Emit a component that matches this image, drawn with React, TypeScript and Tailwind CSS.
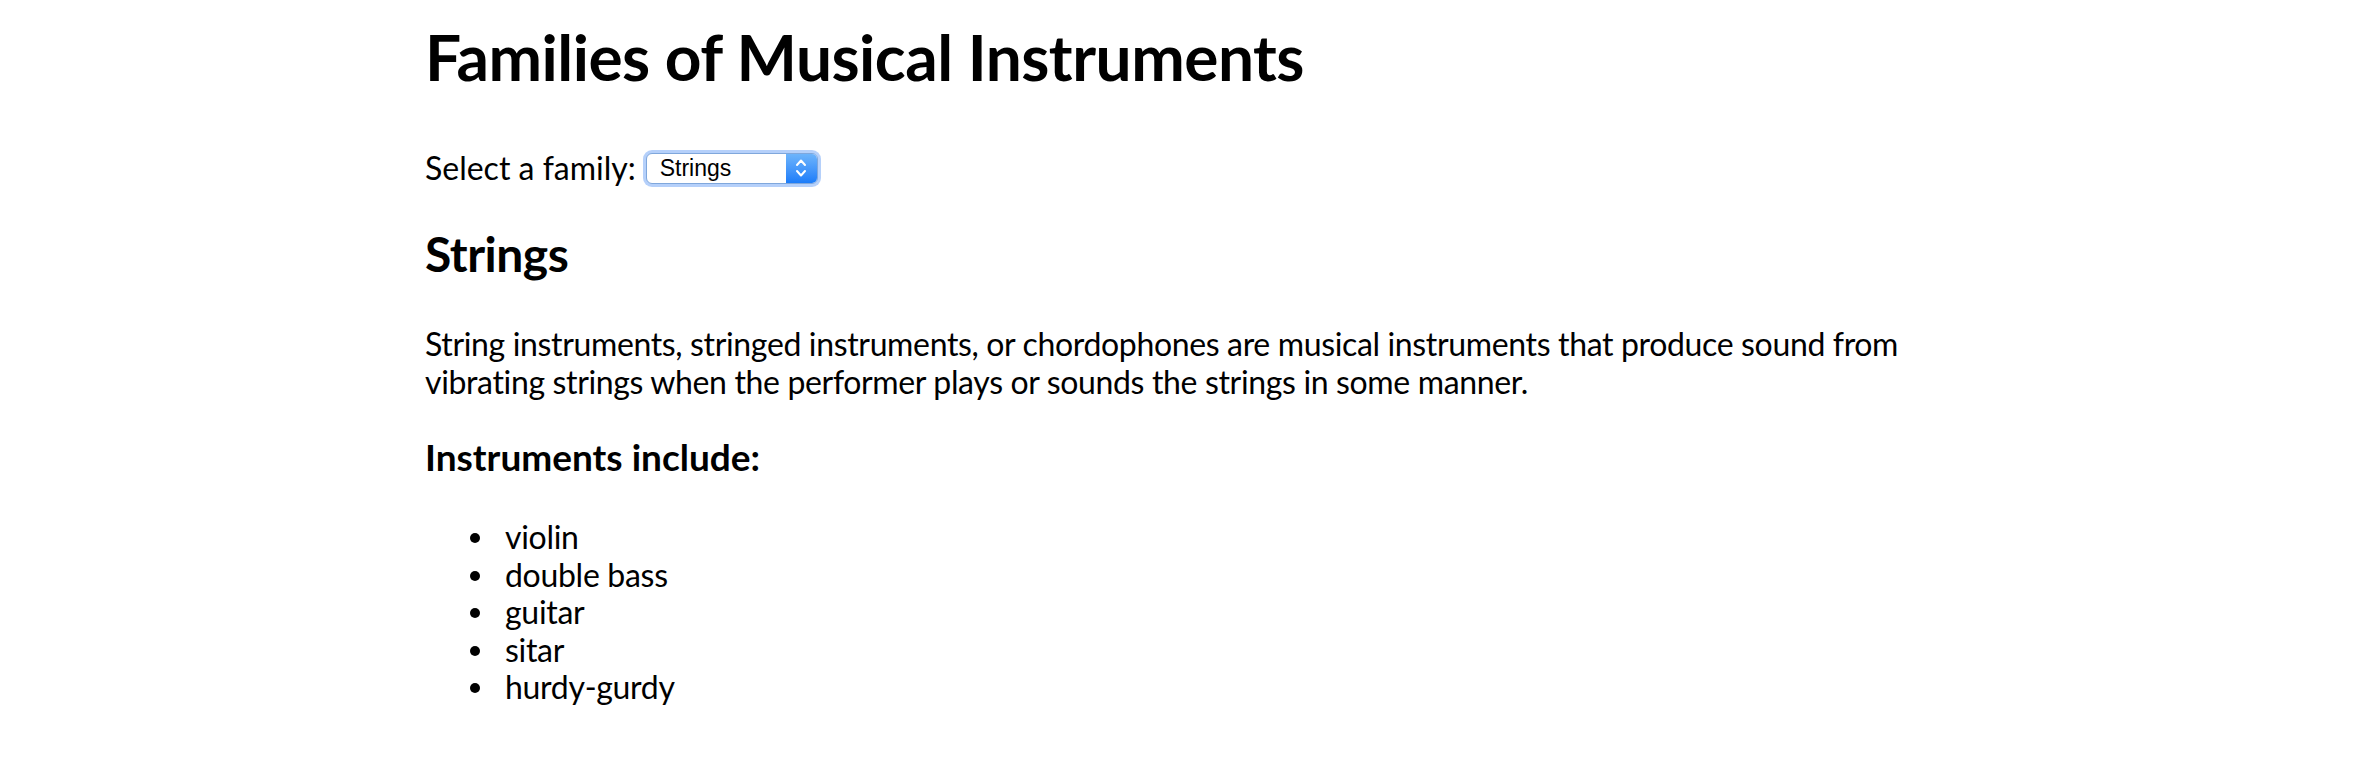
const instruments = ["violin", "double bass", "guitar", "sitar", "hurdy-gurdy"];

const FamilySelect = () => {
  return (
    <div className="inline-flex items-stretch ml-[10px] h-[31px] w-[172px] rounded-[6px] border border-[#7fa7dc] bg-white shadow-[0_0_0_3px_rgba(120,170,245,0.55)] overflow-hidden">
      <div className="flex-1 flex items-center pl-[13px] text-[23px] text-black font-['Liberation_Sans',Arial,sans-serif]">
        Strings
      </div>
      <div className="w-[31px] flex items-center justify-center bg-gradient-to-b from-[#6db4fb] to-[#1a7cf9]">
        <svg width="14" height="24" viewBox="0 0 14 24" fill="none" stroke="white" strokeWidth="2" strokeLinecap="round" strokeLinejoin="round">
          <path d="M3 9 L7 4.5 L11 9" />
          <path d="M3 15 L7 19.5 L11 15" />
        </svg>
      </div>
    </div>
  );
};

const App = () => {
  return (
    <div className="min-h-screen bg-white text-black font-['Lato','Noto_Sans',sans-serif]">
      <div className="w-[1516px] mx-auto pt-[19px]">
        {/* Title */}
        <h1 className="text-[64px] leading-[76px] font-bold tracking-[-0.5px]">
          Families of Musical Instruments
        </h1>

        {/* Family picker */}
        <div className="mt-[54px] flex items-center text-[32px] leading-[38px]">
          <span>Select a family:</span>
          <FamilySelect />
        </div>

        {/* Family details */}
        <h2 className="mt-[38px] text-[48px] leading-[57px] font-bold tracking-[-0.5px]">Strings</h2>
        <p className="mt-[43px] text-[32px] leading-[38px] tracking-[-0.35px]">
          String instruments, stringed instruments, or chordophones are musical instruments that produce sound from
          <br />
          vibrating strings when the performer plays or sounds the strings in some manner.
        </p>

        <h3 className="mt-[34px] text-[37px] leading-[44px] font-bold">Instruments include:</h3>
        <ul className="mt-[39px] pl-[45px] text-[32px] leading-[37.5px] tracking-[-0.3px]">
          {instruments.map((name) => (
            <li key={name} className="flex items-center">
              <span className="w-[10px] h-[10px] rounded-full bg-black mr-[25px] mt-[3px]" />
              <span>{name}</span>
            </li>
          ))}
        </ul>
      </div>
    </div>
  );
};

export default App;
